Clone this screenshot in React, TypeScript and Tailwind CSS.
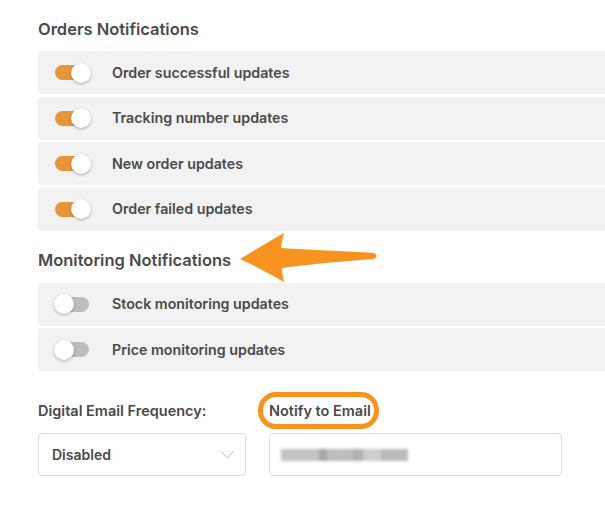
import React from "react";

type Item = { label: string; on: boolean };

const orders: Item[] = [
  { label: "Order successful updates", on: true },
  { label: "Tracking number updates", on: true },
  { label: "New order updates", on: true },
  { label: "Order failed updates", on: true },
];

const monitoring: Item[] = [
  { label: "Stock monitoring updates", on: false },
  { label: "Price monitoring updates", on: false },
];

function Toggle({ on }: { on: boolean }) {
  return (
    <div className="relative flex h-[20px] w-[36px] items-center">
      <div
        className={
          on
            ? "h-[15px] w-[34px] rounded-full bg-[#e8953a]"
            : "h-[15px] w-[34px] rounded-full bg-[#bdbdbd]"
        }
      />
      <div
        className={
          on
            ? "absolute right-0 top-0 h-[20px] w-[20px] rounded-full bg-white shadow-[0_1px_3px_rgba(0,0,0,0.3)]"
            : "absolute left-[-1px] top-0 h-[20px] w-[20px] rounded-full bg-white shadow-[0_1px_3px_rgba(0,0,0,0.3)]"
        }
      />
    </div>
  );
}

function Row({ item }: { item: Item }) {
  return (
    <div className="flex h-[43px] items-center rounded-l-[4px] bg-[#f2f2f2] pl-[17px]">
      <Toggle on={item.on} />
      <span className="ml-[21px] text-[14.25px] font-semibold text-[#4a4a4a]">{item.label}</span>
    </div>
  );
}

export default function App() {
  return (
    <div className="relative h-[524px] w-[605px] overflow-hidden bg-white pl-[38px] pt-[17px] font-['Inter',sans-serif]">
      <h2 className="text-[16.5px] font-semibold leading-[24px] text-[#4a4a4a]">Orders Notifications</h2>
      <div className="mt-[10px] flex flex-col gap-[2.5px]">
        {orders.map((o) => (
          <Row key={o.label} item={o} />
        ))}
      </div>

      <h2 className="mt-[17px] text-[16.5px] font-semibold leading-[24px] text-[#4a4a4a]">
        Monitoring Notifications
      </h2>
      <div className="mt-[11px] flex flex-col gap-[2.5px]">
        {monitoring.map((o) => (
          <Row key={o.label} item={o} />
        ))}
      </div>

      <div className="mt-[30px] flex gap-[23px]">
        <div className="flex w-[208px] flex-col gap-[12px]">
          <label className="text-[14.5px] font-semibold leading-[20px] text-[#4a4a4a]">
            Digital Email Frequency:
          </label>
          <div className="flex h-[43px] items-center justify-between rounded-[4px] border border-[#dcdcdc] bg-white pl-[13px] pr-[11px]">
            <span className="text-[14px] font-semibold text-[#4a4a4a]">Disabled</span>
            <svg width="13" height="8" viewBox="0 0 13 8" fill="none">
              <polyline points="0.5,0.5 6.5,7 12.5,0.5" stroke="#b8b8b8" strokeWidth="1" />
            </svg>
          </div>
        </div>
        <div className="flex w-[293px] flex-col gap-[12px]">
          <label className="relative self-start text-[14.5px] font-semibold leading-[20px] text-[#4a4a4a]">
            Notify to Email
            <span className="absolute bottom-[-8px] left-[-11px] right-[-8px] top-[-9px] rounded-[18px] border-[5px] border-[#f7931e]" />
          </label>
          <div className="flex h-[43px] items-center rounded-[4px] border border-[#dcdcdc] bg-white pl-[11px]">
            <div className="flex h-[12px] blur-[1.5px]">
              <div className="w-[38px] bg-[#c4c4c4]" />
              <div className="w-[8px] bg-[#a8a8a8]" />
              <div className="w-[26px] bg-[#bdbdbd]" />
              <div className="w-[10px] bg-[#b0b0b0]" />
              <div className="w-[18px] bg-[#cdcdcd]" />
              <div className="w-[27px] bg-[#bababa]" />
            </div>
          </div>
        </div>
      </div>

      <svg
        className="pointer-events-none absolute left-0 top-0"
        width="605"
        height="524"
        viewBox="0 0 605 524"
      >
        <path
          d="M240 259 C255 250 270 241 284 233 C283 238 281 244 281 248 C310 250 345 251 374 253 C377 254 377 258 374 259 C345 261 310 264 282 268 C282 272 283 277 284 282 C270 274 255 266 240 259 Z"
          fill="#f7931e"
        />
      </svg>
    </div>
  );
}
